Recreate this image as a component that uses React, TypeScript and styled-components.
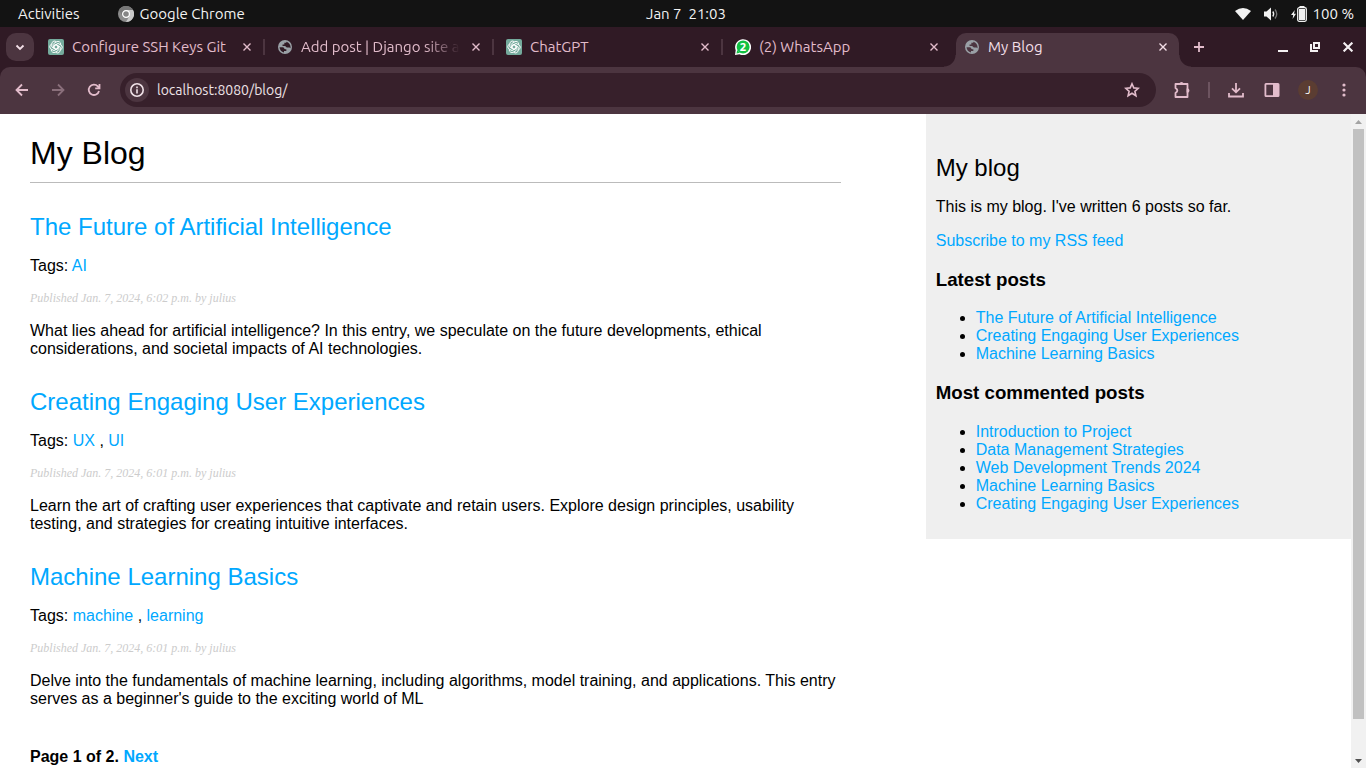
import React from "react";
import styled, { createGlobalStyle, css } from "styled-components";

const uiFont = `Ubuntu, "Noto Sans", sans-serif`;
const colors = {
  frame: "#301a25",
  toolbar: "#4c3540",
  field: "#37202b",
  pink: "#e2bccb",
  muted: "#8a6f7b",
  link: "#00a8ff",
};

const GlobalStyle = createGlobalStyle`
  * { box-sizing: border-box; }
  body { margin: 0; background: #fff; }
  button { border: 0; padding: 0; background: none; color: inherit; font: inherit; display: grid; place-items: center; }
  svg { display: block; flex: none; }
`;

const Desktop = styled.div`
  display: flex;
  flex-direction: column;
  height: 100vh;
  overflow: hidden;
  font-family: ${uiFont};
`;

const SystemBar = styled.header`
  display: grid;
  grid-template-columns: 1fr auto 1fr;
  flex: none;
  height: 27px;
  padding: 0 12px 0 18px;
  background: #131313;
  color: #f2f2f2;
  font-size: 15px;
  line-height: 27px;
  white-space: pre;
`;

const SystemGroup = styled.div<{ $end?: boolean; $gap: number }>`
  display: flex;
  align-items: center;
  gap: ${(p) => p.$gap}px;
  justify-content: ${(p) => (p.$end ? "flex-end" : "flex-start")};
`;

const SystemButton = styled.button`
  && {
    display: flex;
    align-items: center;
    gap: 6px;
  }
`;

const TabStrip = styled.nav`
  display: flex;
  flex: none;
  height: 40px;
  padding: 6px 10px 0 6px;
  background: ${colors.frame};
  color: ${colors.pink};
`;

const TabSearch = styled.button`
  flex: none;
  width: 28px;
  height: 28px;
  margin-right: 2px;
  border-radius: 10px;
  background: ${colors.toolbar};
  color: #f3dfe7;
`;

const Tab = styled.div<{ $active?: boolean; $divider?: boolean }>`
  position: relative;
  display: flex;
  flex: 0 1 229px;
  min-width: 0;
  height: 34px;
  padding: 0 10px 6px 12px;
  align-items: center;
  gap: 8px;
  ${(p) =>
    p.$divider &&
    css`
      &::after {
        content: "";
        position: absolute;
        right: 0;
        top: 6px;
        width: 2px;
        height: 16px;
        background: ${colors.toolbar};
      }
    `}
  ${(p) =>
    p.$active &&
    css`
      flex-basis: 223px;
      padding-left: 8px;
      padding-right: 8px;
      margin-left: 4px;
      border-radius: 10px 10px 0 0;
      background: ${colors.toolbar};
      color: #f3dfe7;
      &::before,
      &::after {
        content: "";
        position: absolute;
        bottom: 0;
        width: 12px;
        height: 12px;
      }
      &::before {
        right: 100%;
        background: radial-gradient(circle at 0 0, transparent 11px, ${colors.toolbar} 12px);
      }
      &::after {
        left: 100%;
        background: radial-gradient(circle at 100% 0, transparent 11px, ${colors.toolbar} 12px);
      }
    `}
`;

const TabTitle = styled.span<{ $fade?: boolean }>`
  flex: 1;
  min-width: 0;
  overflow: hidden;
  white-space: nowrap;
  font-size: 15px;
  line-height: 20px;
  ${(p) =>
    p.$fade &&
    css`
      mask-image: linear-gradient(to right, #000 calc(100% - 36px), transparent);
    `}
`;

const SmallButton = styled.button`
  flex: none;
  width: 16px;
  height: 16px;
`;

const NewTab = styled.button`
  width: 28px;
  height: 28px;
  margin-left: 6px;
`;

const WindowControls = styled.div`
  display: flex;
  gap: 16px;
  height: 28px;
  align-items: center;
  margin-left: auto;
  color: #f4f0f2;
`;

const Toolbar = styled.div`
  background: ${colors.frame};
  flex: none;
`;

const ToolbarInner = styled.div`
  display: flex;
  align-items: center;
  height: 47px;
  padding: 0 12px 1px;
  gap: 16px;
  border-radius: 10px 10px 0 0;
  background: ${colors.toolbar};
  color: ${colors.pink};
`;

const ToolButton = styled.button<{ $dim?: boolean }>`
  flex: none;
  width: 20px;
  height: 20px;
  color: ${(p) => (p.$dim ? colors.muted : "inherit")};
`;

const NavButtons = styled.div`
  display: flex;
  gap: 16px;
`;

const AddressBar = styled.form`
  display: flex;
  flex: 1;
  align-items: center;
  height: 34px;
  padding: 0 14px 0 5px;
  border-radius: 17px;
  background: ${colors.field};
`;

const SiteInfo = styled.button`
  width: 24px;
  height: 24px;
  border-radius: 12px;
  background: ${colors.toolbar};
  color: #f0e3e8;
`;

const AddressInput = styled.input`
  flex: 1;
  min-width: 0;
  margin-left: 8px;
  padding: 0;
  border: 0;
  outline: 0;
  background: none;
  color: #eee3e7;
  font-family: ${uiFont};
  font-size: 14px;
`;

const Separator = styled.span`
  width: 2px;
  height: 16px;
  background: #6d5460;
`;

const Avatar = styled.button`
  width: 20px;
  height: 20px;
  border-radius: 10px;
  background: #5b3d32;
  color: #fff;
  && {
    font-size: 11px;
  }
`;

const Viewport = styled.div`
  display: flex;
  flex: 1;
  min-height: 0;
`;

const BlogPage = styled.div`
  display: flex;
  flex: 1;
  align-items: flex-start;
  justify-content: space-between;
  overflow: hidden;
  background: #fff;
  color: #000;
  font-family: "Liberation Sans", Arial, sans-serif;
  font-size: 16px;
  line-height: 18px;
`;

const Content = styled.main`
  box-sizing: content-box;
  width: 60%;
  padding-left: 30px;
`;

const PageTitle = styled.h1`
  margin: 21px 0 0;
  padding-bottom: 10px;
  border-bottom: 1px solid #bbb;
  font-size: 32px;
  font-weight: 400;
  line-height: 37px;
`;

const Title = styled.h2`
  margin: 30px 0 16px;
  font-size: 24px;
  font-weight: 400;
  line-height: 28px;
`;

const Text = styled.p`
  margin: 16px 0;
`;

const PublishedDate = styled.p`
  margin: 16px 0;
  color: #ccc;
  font-family: "Liberation Serif", serif;
  font-size: 12px;
  font-style: italic;
  line-height: 15px;
`;

const Post = styled.article`
  & > :last-child {
    margin-bottom: 0;
  }
`;

const Link = styled.a`
  color: ${colors.link};
  text-decoration: none;
`;

const Pagination = styled.nav`
  margin: 40px 0;
  font-weight: 700;
`;

const Sidebar = styled.aside`
  box-sizing: content-box;
  display: flow-root;
  width: 30%;
  padding: 10px;
  background: #efefef;
`;

const SideHeading = styled.h3`
  line-height: normal;
`;

const PostList = styled.ul`
  margin: 16px 0;
  padding-left: 40px;
`;

const Scrollbar = styled.div`
  display: flex;
  flex: none;
  flex-direction: column;
  align-items: center;
  width: 15px;
  background: #f1f1f1;
`;

const ScrollArrow = styled.button`
  width: 15px;
  height: 15px;
`;

const ScrollTrack = styled.div`
  flex: 1;
  width: 11px;
`;

const ScrollThumb = styled.div`
  height: 94.5%;
  background: #c1c1c1;
`;

const Globe = () => (
  <svg width="16" height="16" viewBox="0 0 24 24" fill="#9aa0a6">
    <path d="M12 1.500A10.500 10.500 0 1 0 12 22.500 10.500 10.500 0 1 0 12 1.500ZM3.800 12.500H8.600C11 12.500 10.500 15.500 12.500 15.500H14V18H10.500V20.200C6.800 19.600 4 16.500 3.800 12.500ZM14 4.100C17.700 5 20.300 8.200 20.300 12 20.300 12.600 20.200 13.200 20.100 13.800L18.800 12.800H15.200C13.200 12.800 13.800 10.400 11.500 10.400H8.300V8.200H11V5.800H14Z" fillRule="evenodd" />
  </svg>
);

const ChatLogo = () => (
  <svg width="16" height="16" viewBox="0 0 24 24">
    <rect width="24" height="24" rx="3" fill="#74aa9c" />
    <g fill="none" stroke="#fff" strokeWidth="1.2" transform="translate(12 12) scale(1.12)">
      {[0, 60, 120, 180, 240, 300].map((a) => (
        <path key={a} transform={`rotate(${a})`} d="M-2.8 1.6V-4.800L.9-7A3.600 3.600 0 0 1 6.300-3.900V-3M-2.800-1.600 0-3.200 2.800-1.600" />
      ))}
    </g>
  </svg>
);

const WhatsApp = () => (
  <svg width="16" height="16" viewBox="0 0 16 16">
    <path d="M0 16 .7 11.2A8 8 0 1 1 4.5 15.3Z" fill="#fff" />
    <circle cx="8.1" cy="7.9" r="6.5" fill="#12c143" />
    <path d="M1.5 14.6 2.2 11 5 13.7Z" fill="#12c143" />
    <text x="8" y="11.8" textAnchor="middle" fill="#fff" fontSize="11" fontWeight="700" fontFamily="Noto Sans">2</text>
  </svg>
);

const ChromeMark = () => (
  <svg width="16" height="16" viewBox="0 0 16 16">
    <circle cx="8" cy="8" r="8" fill="#8b8b8b" />
    <path d="M8 4H15A8 8 0 0 1 8 16L11.5 10Z" fill="#c9c9c9" />
    <path d="M1 4A8 8 0 0 1 15 4H8L4.5 10Z" fill="#777" />
    <circle cx="8" cy="8" r="3.4" fill="#858585" stroke="#fff" strokeWidth="1.2" />
  </svg>
);

const Cross = ({ size = 8, weight = 1.4 }: { size?: number; weight?: number }) => (
  <svg width={size} height={size} viewBox="0 0 8 8" stroke="currentColor" strokeWidth={weight}>
    <path d="M.5.5 7.5 7.5M7.5.5.5 7.5" />
  </svg>
);

const Icon = ({ d, size = 16, weight = 1.8 }: { d: string; size?: number; weight?: number }) => (
  <svg width={size} height={size} viewBox="0 0 16 16" fill="none" stroke="currentColor" strokeWidth={weight}>
    <path d={d} />
  </svg>
);

const tabs = [
  { title: "Configure SSH Keys Git", icon: <ChatLogo />, divider: true },
  { title: "Add post | Django site a", icon: <Globe />, divider: true, fade: true },
  { title: "ChatGPT", icon: <ChatLogo />, divider: true },
  { title: "(2) WhatsApp", icon: <WhatsApp /> },
  { title: "My Blog", icon: <Globe />, active: true },
];

const posts = [
  {
    title: "The Future of Artificial Intelligence",
    tags: ["AI"],
    date: "Jan. 7, 2024, 6:02 p.m.",
    body: "What lies ahead for artificial intelligence? In this entry, we speculate on the future developments, ethical considerations, and societal impacts of AI technologies.",
  },
  {
    title: "Creating Engaging User Experiences",
    tags: ["UX", "UI"],
    date: "Jan. 7, 2024, 6:01 p.m.",
    body: "Learn the art of crafting user experiences that captivate and retain users. Explore design principles, usability testing, and strategies for creating intuitive interfaces.",
  },
  {
    title: "Machine Learning Basics",
    tags: ["machine", "learning"],
    date: "Jan. 7, 2024, 6:01 p.m.",
    body: "Delve into the fundamentals of machine learning, including algorithms, model training, and applications. This entry serves as a beginner's guide to the exciting world of ML",
  },
];

const commented = [
  "Introduction to Project",
  "Data Management Strategies",
  "Web Development Trends 2024",
  "Machine Learning Basics",
  "Creating Engaging User Experiences",
];

const Links = ({ items }: { items: string[] }) => (
  <PostList>
    {items.map((item) => (
      <li key={item}>
        <Link href="#">{item}</Link>
      </li>
    ))}
  </PostList>
);

export default function App() {
  return (
    <Desktop>
      <GlobalStyle />
      <SystemBar>
        <SystemGroup $gap={38}>
          <SystemButton>Activities</SystemButton>
          <SystemButton>
            <ChromeMark />
            Google Chrome
          </SystemButton>
        </SystemGroup>
        <SystemButton>{"Jan 7  21:03"}</SystemButton>
        <SystemGroup $end $gap={12}>
          <svg width="16" height="14" viewBox="0 0 16 14" fill="#f2f2f2">
            <path d="M0 4Q8-2 16 4L8 13Z" />
          </svg>
          <svg width="16" height="14" viewBox="0 0 16 14">
            <path d="M1 4.5H3.5L8 .5V13.5L3.5 9.5H1Z" fill="#f2f2f2" />
            <path d="M9.8 4.5Q11.6 7 9.8 9.5" fill="none" stroke="#f2f2f2" strokeWidth="1.3" />
            <path d="M12 2.5Q15.5 7 12 11.5" fill="none" stroke="#777" strokeWidth="1.3" />
          </svg>
          <SystemButton>
            <svg width="16" height="16" viewBox="0 0 16 16" fill="#f2f2f2">
              <path d="M3.8 4 0 9H2.2L1.6 13 5 7.8H3Z" />
              <path d="M8.5 0H13.5V2H8.5Z" />
              <rect x="6.7" y="1.7" width="8.6" height="13.6" rx="1.5" fill="none" stroke="#f2f2f2" strokeWidth="1.3" />
              <rect x="8" y="3" width="6" height="11" />
            </svg>
            100 %
          </SystemButton>
        </SystemGroup>
      </SystemBar>

      <TabStrip aria-label="Browser tabs">
        <TabSearch aria-label="Search tabs">
          <Icon d="M4.5 6.5 8 10 11.5 6.5" />
        </TabSearch>
        {tabs.map((tab) => (
          <Tab key={tab.title} $active={tab.active} $divider={tab.divider}>
            {tab.icon}
            <TabTitle $fade={tab.fade}>{tab.title}</TabTitle>
            <SmallButton aria-label={`Close ${tab.title}`}>
              <Cross />
            </SmallButton>
          </Tab>
        ))}
        <NewTab aria-label="New tab">
          <Icon d="M8 3V13M3 8H13" />
        </NewTab>
        <WindowControls>
          <SmallButton aria-label="Minimize">
            <Icon d="M2 12H12" weight={2} />
          </SmallButton>
          <SmallButton aria-label="Restore">
            <Icon d="M6 4H11V9H6ZM3 5V12H10" weight={2} />
          </SmallButton>
          <SmallButton aria-label="Close window">
            <Cross size={10} weight={1.7} />
          </SmallButton>
        </WindowControls>
      </TabStrip>

      <Toolbar>
        <ToolbarInner>
          <NavButtons>
            <ToolButton aria-label="Back">
              <Icon d="M14 8H3M8 2.5 2.5 8 8 13.5" />
            </ToolButton>
            <ToolButton aria-label="Forward" $dim>
              <Icon d="M2 8H13M8 2.5 13.5 8 8 13.5" />
            </ToolButton>
            <ToolButton aria-label="Reload">
              <Icon d="M13 9A5.2 5.2 0 1 1 11.8 4.3L13.2 6M13.5 2V6.3H9.2" />
            </ToolButton>
          </NavButtons>
          <AddressBar>
            <SiteInfo type="button" aria-label="Site information">
              <Icon d="M8 1.8A6.2 6.2 0 1 1 8 14.2A6.2 6.2 0 1 1 8 1.8ZM8 7.2V11.4M8 4.6V6.2" weight={1.6} />
            </SiteInfo>
            <AddressInput aria-label="Address" defaultValue="localhost:8080/blog/" />
            <ToolButton type="button" aria-label="Bookmark">
              <Icon d="M8 1.8 9.8 5.9 14.3 6.3 10.9 9.3 11.9 13.7 8 11.3 4.1 13.7 5.1 9.3 1.7 6.3 6.2 5.9Z" weight={1.6} />
            </ToolButton>
          </AddressBar>
          <ToolButton aria-label="Extensions">
            <svg width="18" height="18" viewBox="0 0 18 18" fill="none" stroke="currentColor" strokeWidth="1.8" strokeLinejoin="round">
              <path d="M2.500 3H14.500V16H2.500V12Q6.200 9.500 2.500 7Z" />
              <path d="M7 3A1.600 1.600 0 0 1 10 3ZM14.500 8A1.600 1.600 0 0 1 14.500 11Z" fill="currentColor" />
            </svg>
          </ToolButton>
          <Separator />
          <ToolButton aria-label="Downloads">
            <Icon d="M8 1V10M4 6.3 8 10.3 12 6.3M1 11V14.5H15V11" />
          </ToolButton>
          <ToolButton aria-label="Side panel">
            <svg width="16" height="16" viewBox="0 0 16 16" fill="currentColor">
              <path fillRule="evenodd" d="M2 1H14A1.5 1.5 0 0 1 15.500 2.500V13.500A1.500 1.500 0 0 1 14 15H2A1.500 1.500 0 0 1 .5 13.500V2.500A1.500 1.500 0 0 1 2 1ZM2.300 2.800V13.200H9V2.800Z" />
            </svg>
          </ToolButton>
          <Avatar aria-label="Profile">J</Avatar>
          <ToolButton aria-label="Menu">
            <svg width="16" height="16" viewBox="0 0 16 16" fill="currentColor">
              <circle cx="8" cy="3" r="1.6" />
              <circle cx="8" cy="8" r="1.6" />
              <circle cx="8" cy="13" r="1.6" />
            </svg>
          </ToolButton>
        </ToolbarInner>
      </Toolbar>

      <Viewport>
        <BlogPage>
          <Content>
            <PageTitle>My Blog</PageTitle>
            {posts.map((post) => (
              <Post key={post.title}>
                <Title>
                  <Link href="#">{post.title}</Link>
                </Title>
                <Text>
                  Tags:{" "}
                  {post.tags.map((tag, i) => (
                    <React.Fragment key={tag}>
                      {i > 0 && " , "}
                      <Link href="#">{tag}</Link>
                    </React.Fragment>
                  ))}
                </Text>
                <PublishedDate>Published {post.date} by julius</PublishedDate>
                <Text>{post.body}</Text>
              </Post>
            ))}
            <Pagination>
              Page 1 of 2. <Link href="#">Next</Link>
            </Pagination>
          </Content>
          <Sidebar>
            <Title>My blog</Title>
            <Text>This is my blog. I've written 6 posts so far.</Text>
            <Text>
              <Link href="#">Subscribe to my RSS feed</Link>
            </Text>
            <SideHeading>Latest posts</SideHeading>
            <Links items={posts.map((post) => post.title)} />
            <SideHeading>Most commented posts</SideHeading>
            <Links items={commented} />
          </Sidebar>
        </BlogPage>
        <Scrollbar>
          <ScrollArrow aria-label="Scroll up">
            <svg width="7" height="4" viewBox="0 0 7 4" fill="#a3a3a3">
              <path d="M0 4 3.500 0 7 4Z" />
            </svg>
          </ScrollArrow>
          <ScrollTrack>
            <ScrollThumb />
          </ScrollTrack>
          <ScrollArrow aria-label="Scroll down">
            <svg width="7" height="4" viewBox="0 0 7 4" fill="#505050">
              <path d="M0 0H7L3.500 4Z" />
            </svg>
          </ScrollArrow>
        </Scrollbar>
      </Viewport>
    </Desktop>
  );
}
